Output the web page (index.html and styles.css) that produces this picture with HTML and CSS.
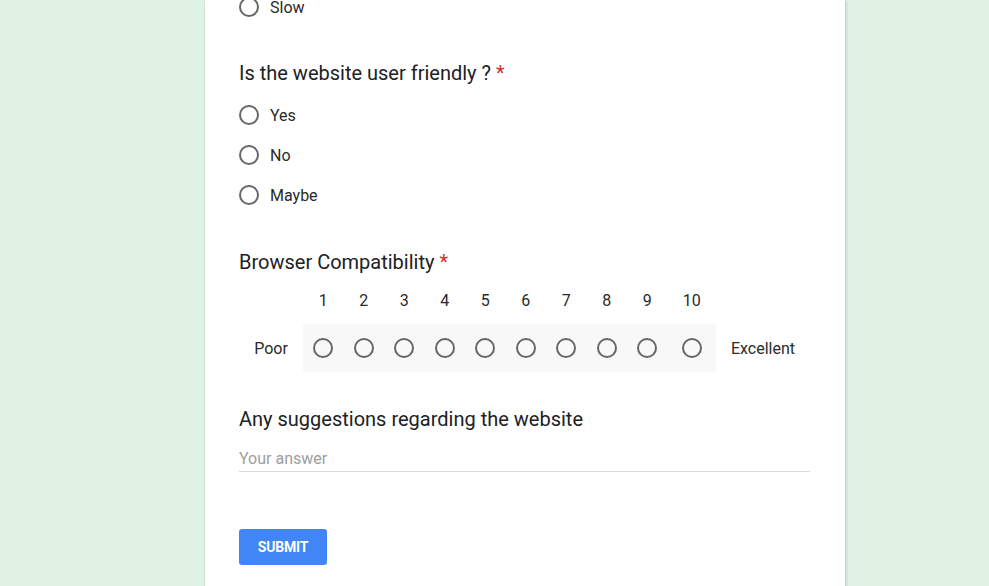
FILE: index.html
```html
<!DOCTYPE html>
<html>
<head>
<meta charset="utf-8">
<link rel="stylesheet" href="styles.css">
</head>
<body>
<div class="page">
  <form class="card">
    <div class="options first">
      <label class="option"><span class="radio"></span><span class="opt-text">Slow</span></label>
    </div>

    <div class="question q-first">
      <div class="title">Is the website user friendly ? <span class="req">*</span></div>
      <div class="options">
        <label class="option"><span class="radio"></span><span class="opt-text">Yes</span></label>
        <label class="option"><span class="radio"></span><span class="opt-text">No</span></label>
        <label class="option"><span class="radio"></span><span class="opt-text">Maybe</span></label>
      </div>
    </div>

    <div class="question">
      <div class="title title-tight">Browser Compatibility <span class="req">*</span></div>
      <div class="scale">
        <span></span>
        <span class="num">1</span><span class="num">2</span><span class="num">3</span><span class="num">4</span><span class="num">5</span>
        <span class="num">6</span><span class="num">7</span><span class="num">8</span><span class="num">9</span><span class="num">10</span>
        <span></span>
        <span class="end">Poor</span>
        <span class="cell"><span class="radio"></span></span>
        <span class="cell"><span class="radio"></span></span>
        <span class="cell"><span class="radio"></span></span>
        <span class="cell"><span class="radio"></span></span>
        <span class="cell"><span class="radio"></span></span>
        <span class="cell"><span class="radio"></span></span>
        <span class="cell"><span class="radio"></span></span>
        <span class="cell"><span class="radio"></span></span>
        <span class="cell"><span class="radio"></span></span>
        <span class="cell"><span class="radio"></span></span>
        <span class="end">Excellent</span>
      </div>
    </div>

    <div class="question">
      <div class="title title-tight">Any suggestions regarding the website</div>
      <div class="answer">Your answer</div>
    </div>

    <div class="actions">
      <button type="button" class="submit">SUBMIT</button>
    </div>
  </form>
</div>
</body>
</html>
```
FILE: styles.css
```css
html, body {
  margin: 0;
  padding: 0;
  height: 100%;
  overflow: hidden;
}
body {
  background: #e0f2e4;
  font-family: Roboto, "Liberation Sans", Arial, sans-serif;
  color: #202124;
}
.page {
  display: flex;
  padding-left: 205px;
}
.card {
  width: 640px;
  min-height: 620px;
  box-sizing: border-box;
  background: #fff;
  padding: 0 35px 40px 34px;
  box-shadow: 0 2px 1px -1px rgba(0,0,0,.2), 0 1px 1px 0 rgba(0,0,0,.14), 1px 1px 3px 0 rgba(0,0,0,.16);
}
.options {
  display: flex;
  flex-direction: column;
}
.options.first {
  margin-top: -13px;
}
.option {
  display: flex;
  align-items: center;
  height: 40px;
}
.radio {
  display: block;
  width: 20px;
  height: 20px;
  box-sizing: border-box;
  border: 2px solid #666;
  border-radius: 50%;
  flex: none;
}
.opt-text {
  margin-left: 11px;
  font-size: 16px;
  color: #2a2a2a;
}
.question {
  margin-top: 35px;
}
.question.q-first {
  margin-top: 34px;
}
.title {
  font-size: 20px;
  line-height: 24px;
  color: #202124;
  margin-bottom: 10px;
}
.title.title-tight {
  margin-bottom: 0;
}
.req {
  color: #d93025;
}
.scale {
  display: grid;
  grid-template-columns: 64px repeat(9, 40.5px) 48.5px 94px;
  grid-template-rows: 24px 48px;
  row-gap: 12px;
  margin-top: 14px;
  font-size: 16px;
  color: #2a2a2a;
  align-items: center;
}
.num,
.end {
  text-align: center;
}
.cell {
  display: flex;
  justify-content: center;
  align-items: center;
  height: 48px;
  background: #f8f8f8;
}
.answer {
  margin-top: 16px;
  font-size: 16px;
  line-height: 24px;
  color: #9e9e9e;
  border-bottom: 1px solid #dadada;
}
.actions {
  margin-top: 57px;
}
.submit {
  display: flex;
  align-items: center;
  justify-content: center;
  width: 88px;
  height: 36px;
  border: none;
  border-radius: 3px;
  background: #4285f4;
  color: #fff;
  font-family: Roboto, "Liberation Sans", Arial, sans-serif;
  font-weight: 700;
  font-size: 14px;
  letter-spacing: -0.2px;
  padding: 0;
}
```
